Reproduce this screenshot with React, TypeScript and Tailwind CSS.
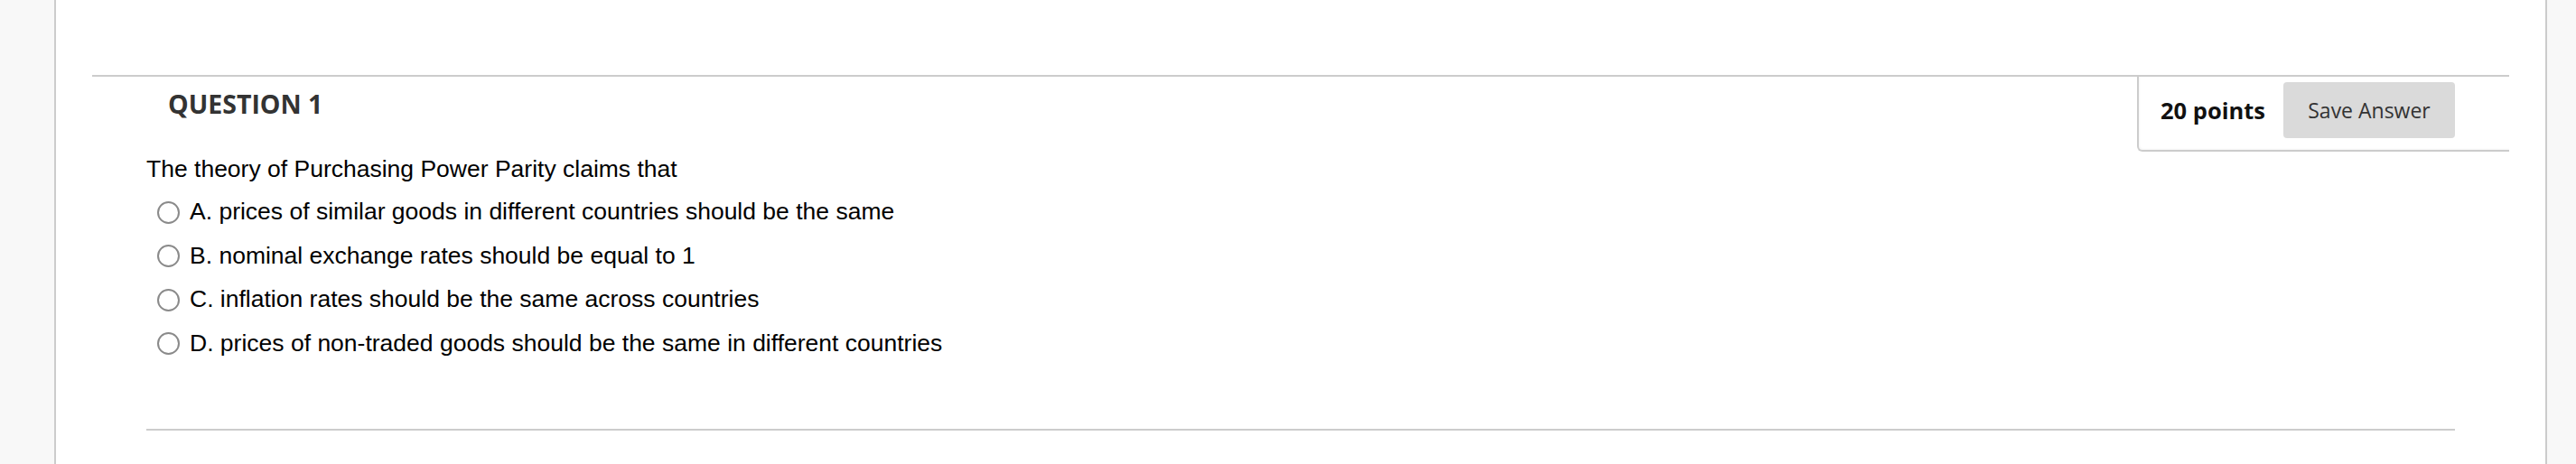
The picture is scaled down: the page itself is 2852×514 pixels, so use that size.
import React from 'react';

const options = [
    'A. prices of similar goods in different countries should be the same',
    'B. nominal exchange rates should be equal to 1',
    'C. inflation rates should be the same across countries',
    'D. prices of non-traded goods should be the same in different countries',
];

function Radio() {
    return <span className="inline-block w-[25px] h-[25px] rounded-full border-2 border-[#8a8a8a] bg-white shrink-0" />;
}

export default function App() {
    return (
        <div className="flex h-screen w-full bg-white">
            <div className="w-[62px] shrink-0 bg-[#f8f8f8] border-r-2 border-[#cccccc]" />

            <div className="flex-1 flex flex-col bg-white">
                <div className="h-[83px]" />

                {/* header row: question number + points box */}
                <div className="mx-[40px] border-t-2 border-[#cccccc] flex justify-between items-start">
                    <h2 className="pl-[84px] pt-[13px] text-[28.5px] leading-[34px] font-bold text-[#333333]" style={{ fontFamily: '"Open Sans", sans-serif' }}>
                        QUESTION 1
                    </h2>
                    <div className="flex items-center border-l-2 border-b-2 border-[#cccccc] rounded-bl-[6px] pl-[24px] pr-[60px] pt-[6px] pb-[13px] shadow-[inset_1px_-1px_2px_rgba(0,0,0,0.04)]" style={{ fontFamily: '"Open Sans", sans-serif' }}>
                        <span className="text-[25.5px] font-bold text-[#111111] mr-[20px]">20 points</span>
                        <button className="w-[190px] h-[62px] rounded-[4px] bg-[#dadada] text-[23px] text-[#333333]">Save Answer</button>
                    </div>
                </div>

                {/* question body */}
                <div className="mx-[100px] mt-[4px]" style={{ fontFamily: '"Liberation Sans", Arial, sans-serif' }}>
                    <p className="text-[26.5px] leading-[30px] text-black">The theory of Purchasing Power Parity claims that</p>
                    <ul className="mt-[9px] pl-[12px]">
                        {options.map(o => (
                            <li key={o} className="flex items-center h-[48.5px] gap-[11px] text-[26.5px] text-black">
                                <Radio />
                                <span>{o}</span>
                            </li>
                        ))}
                    </ul>
                </div>

                <div className="flex-1" />
                <div className="mx-[100px] border-t-2 border-[#cccccc] mb-[37px]" />
            </div>

            <div className="w-[34px] shrink-0 bg-[#f8f8f8] border-l-2 border-[#cccccc]" />
        </div>
    );
}
